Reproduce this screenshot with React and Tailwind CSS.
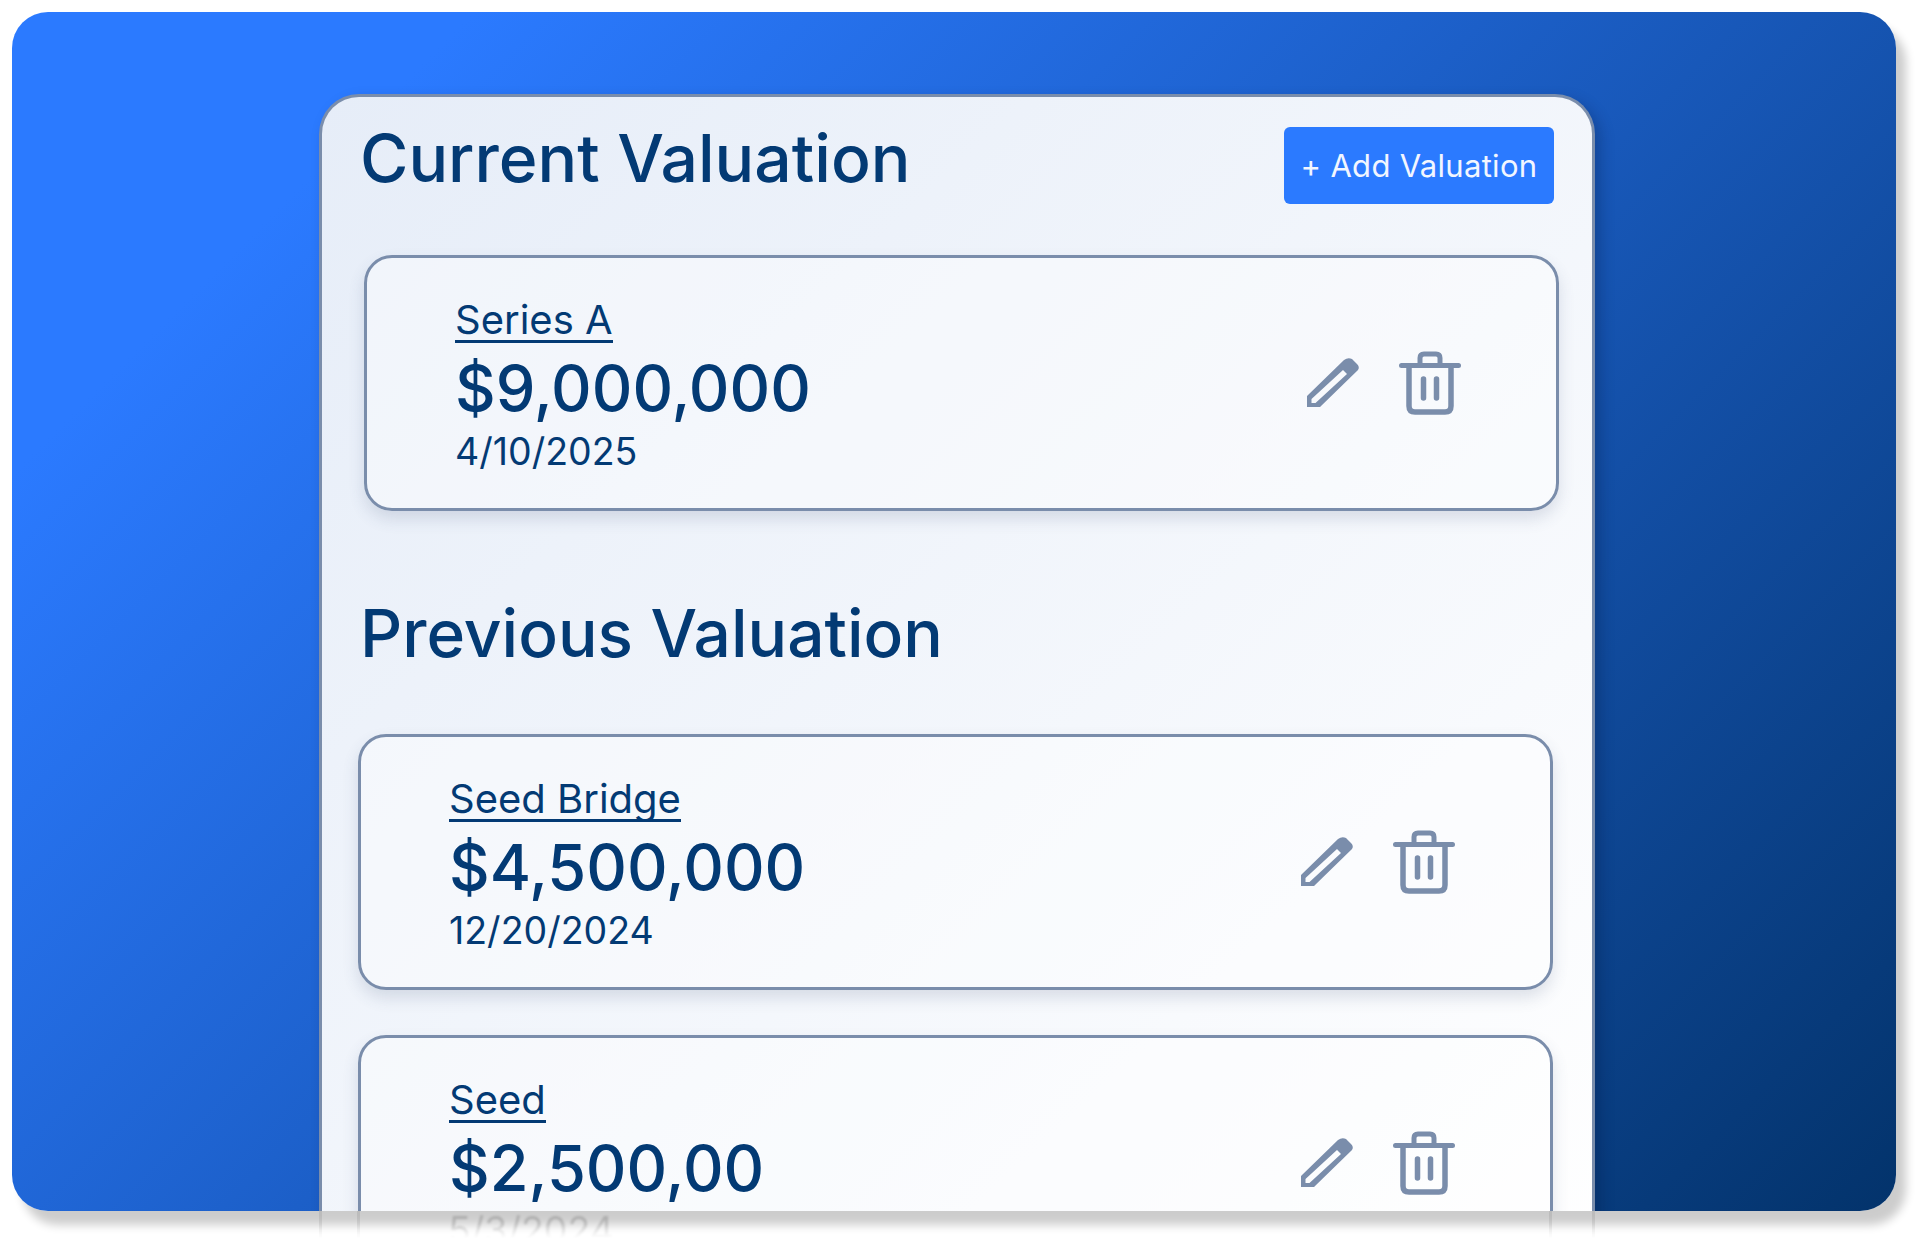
import React from 'react'

const PencilIcon = () => (
  <svg width="54" height="52" viewBox="0 0 54 52" className="shrink-0">
    <path
      fillRule="evenodd"
      fill="#7a8dab"
      d="M1 50 V39 L38 3 Q42 0 46 2 L51 7 Q54 10 52 13 L14 50 Z M5.5 46 H9.5 L41 17 L37 13 L5.5 42 Z"
    />
  </svg>
)

const TrashIcon = () => (
  <svg width="62" height="64" viewBox="0 0 62 64" fill="none" className="shrink-0">
    <path d="M2.5 14.5 H59.5" stroke="#7a8dab" strokeWidth="5" strokeLinecap="round" />
    <path d="M21 14 V7 Q21 3 25 3 H37 Q41 3 41 7 V14" stroke="#7a8dab" strokeWidth="5" />
    <path d="M10 15 V55 Q10 61 16 61 H46 Q52 61 52 55 V15" stroke="#7a8dab" strokeWidth="5.5" />
    <path d="M24.5 28 V47 M37.5 28 V47" stroke="#7a8dab" strokeWidth="5.5" strokeLinecap="round" />
  </svg>
)

const ValuationCard = ({ round, amount, date, className }) => (
  <div className={`h-[256px] w-[1195px] shrink-0 flex items-center justify-between rounded-[28px] border-[3px] border-[#7a8dab] bg-white/40 pl-[88px] pr-[95px] shadow-[0_8px_16px_rgba(60,80,120,0.16)] ${className}`}>
    <div className="flex flex-col self-start pt-[42px] text-[#033a74]">
      <span className="self-start border-b-[3px] border-[#033a74] text-[40px] leading-[40px]">{round}</span>
      <span className="mt-[9px] text-[63px] leading-[72px] font-medium">{amount}</span>
      <span className="mt-[6px] text-[37.5px] leading-[44px]">{date}</span>
    </div>
    <div className="flex items-center gap-[39px]">
      <PencilIcon />
      <TrashIcon />
    </div>
  </div>
)

export default function App() {
  return (
    <div className="min-h-[1251px] bg-white pl-[12px] pt-[12px] font-['Inter',sans-serif]">
      <div className="relative h-[1199px] w-[1884px] rounded-[36px] shadow-[10px_14px_10px_rgba(0,0,0,0.2)]">
        <div className="h-full overflow-hidden rounded-[36px] bg-[linear-gradient(135deg,#2b7aff_15%,#1c5fc8_48%,#03336b_100%)] pl-[307px] pt-[82px]">
          <div className="h-[1200px] w-[1276px] rounded-t-[40px] border-[3px] border-b-0 border-[#7a8dab] bg-gradient-to-br from-[#e6edf8] to-[#ffffff] pl-[36px] shadow-[6px_6px_14px_rgba(0,20,60,0.25)]">
            <div className="flex items-start justify-between pr-[38px] pt-[22px]">
              <h1 className="ml-[2px] text-[66px] leading-[78px] font-medium text-[#033a74]">Current Valuation</h1>
              <button className="mt-[8px] h-[77px] w-[270px] rounded-[6px] bg-[#2b7aff] pt-[1px] text-[31px] text-[#f2f6ff] tracking-[0.3px]">+ Add Valuation</button>
            </div>
            <ValuationCard className="mt-[51px] ml-[6px]" round="Series A" amount="$9,000,000" date="4/10/2025" />
            <h2 className="ml-[2px] mt-[83px] text-[65.8px] leading-[78px] font-medium text-[#033a74]">Previous Valuation</h2>
            <ValuationCard className="mt-[62px]" round="Seed Bridge" amount="$4,500,000" date="12/20/2024" />
            <ValuationCard className="mt-[45px]" round="Seed" amount="$2,500,00" />
          </div>
        </div>
        {/* faint ghost of the clipped content under the bottom edge */}
        <div className="absolute left-[307px] top-full h-[44px] w-[1276px] border-x-[3px] border-[#00000014] [mask-image:linear-gradient(black_30%,transparent_62%)]">
          <div className="ml-[35px] h-full w-[1195px] border-x-[3px] border-[#00000014] pl-[88px]">
            <span className="relative -top-[2px] block text-[37.5px] leading-[44px] text-[#00000026] blur-[1px]">5/3/2024</span>
          </div>
        </div>
      </div>
    </div>
  )
}
